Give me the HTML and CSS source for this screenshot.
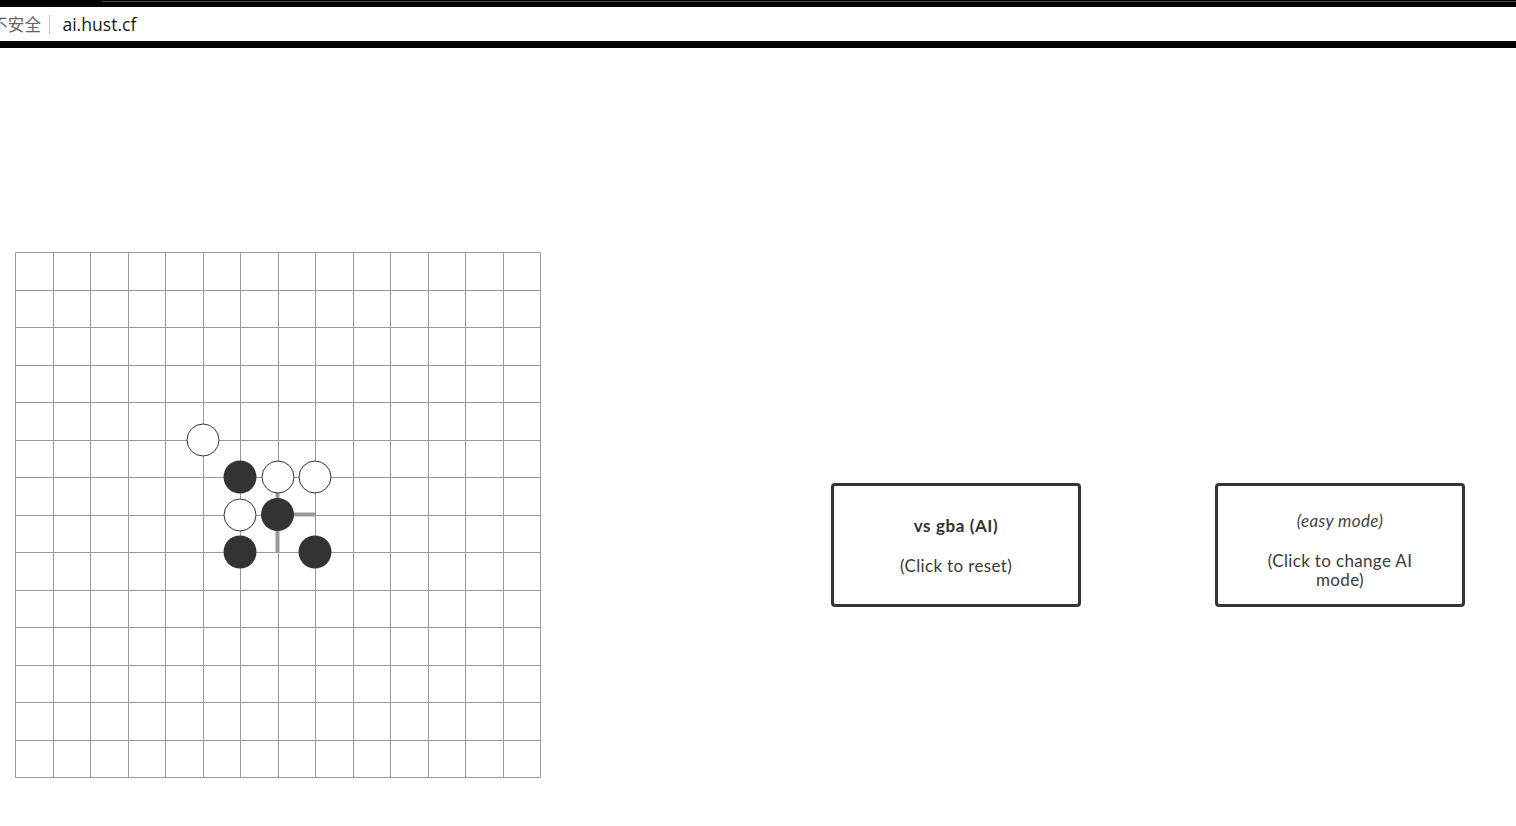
FILE: index.html
```html
<!DOCTYPE html>
<html>
<head>
<meta charset="utf-8">
<title>ai.hust.cf</title>
<link rel="stylesheet" href="styles.css">
</head>
<body>
<div class="chrome">
  <div class="chrome-top"><div class="chrome-line"></div></div>
  <div class="address">
    <span class="insecure">不安全</span>
    <span class="sep"></span>
    <span class="url">ai.hust.cf</span>
  </div>
  <div class="chrome-bottom"></div>
</div>
<main class="page">
  <svg class="board" width="526" height="526" viewBox="0 0 526 526">
    <path class="grid" d="M0.5 0.5V525.5M38.5 0.5V525.5M75.5 0.5V525.5M113.5 0.5V525.5M150.5 0.5V525.5M188.5 0.5V525.5M225.5 0.5V525.5M263.5 0.5V525.5M300.5 0.5V525.5M338.5 0.5V525.5M375.5 0.5V525.5M413.5 0.5V525.5M450.5 0.5V525.5M488.5 0.5V525.5M525.5 0.5V525.5M0.5 0.5H525.5M0.5 38.5H525.5M0.5 75.5H525.5M0.5 113.5H525.5M0.5 150.5H525.5M0.5 188.5H525.5M0.5 225.5H525.5M0.5 263.5H525.5M0.5 300.5H525.5M0.5 338.5H525.5M0.5 375.5H525.5M0.5 413.5H525.5M0.5 450.5H525.5M0.5 488.5H525.5M0.5 525.5H525.5"/>
    <path class="hint" d="M262.5 225V300M262.5 262.5H300"/>
    <circle class="white" cx="188" cy="188" r="16"/>
    <circle class="black" cx="225" cy="225" r="16.5"/>
    <circle class="white" cx="263" cy="225" r="16"/>
    <circle class="white" cx="300" cy="225" r="16"/>
    <circle class="white" cx="225" cy="263" r="16"/>
    <circle class="black" cx="262.5" cy="262.5" r="16.5"/>
    <circle class="black" cx="225" cy="300" r="16.5"/>
    <circle class="black" cx="300" cy="300" r="16.5"/>
  </svg>
  <div class="controls">
    <div class="btn">
      <div class="btn-title">vs gba (AI)</div>
      <div class="btn-sub">(Click to reset)</div>
    </div>
    <div class="btn btn-mode">
      <div class="btn-mode-title">(easy mode)</div>
      <div class="btn-sub">(Click to change AI mode)</div>
    </div>
  </div>
</main>
</body>
</html>
```

FILE: styles.css
```css
html, body {
  margin: 0;
  padding: 0;
  background: #fff;
}
body {
  width: 1516px;
  height: 826px;
  overflow: hidden;
  font-family: Lato, "Open Sans", sans-serif;
}
.chrome {
  display: flex;
  flex-direction: column;
}
.chrome-top {
  height: 7px;
  background: #000;
  display: flex;
  justify-content: flex-end;
}
.chrome-line {
  margin-top: 1px;
  width: 1414px;
  height: 1px;
  background: #4d4d4d;
}
.address {
  height: 34px;
  background: #fff;
  display: flex;
  align-items: center;
  margin-left: -9px;
}
.insecure {
  font-family: "Noto Sans CJK SC", sans-serif;
  font-size: 16.5px;
  color: #5f6368;
  letter-spacing: 0.3px;
}
.sep {
  width: 1px;
  height: 19px;
  background: #c4c4c4;
  margin: 0 12px 0 8px;
}
.url {
  font-family: "Open Sans", sans-serif;
  font-size: 17.6px;
  color: #1a1a1a;
}
.chrome-bottom {
  height: 7px;
  background: #000;
}
.page {
  display: flex;
  align-items: flex-start;
  padding: 204px 0 0 15px;
}
.board {
  display: block;
  flex: none;
}
.grid {
  fill: none;
  stroke: #999;
  stroke-width: 1;
}
.hint {
  fill: none;
  stroke: #999;
  stroke-width: 4;
}
.white {
  fill: #fff;
  stroke: #333;
  stroke-width: 1;
}
.black {
  fill: #333;
}
.controls {
  display: flex;
  gap: 134px;
  margin: 231px 0 0 290px;
}
.btn {
  box-sizing: border-box;
  width: 250px;
  height: 124px;
  border: 3px solid #333;
  border-radius: 4px;
  display: flex;
  flex-direction: column;
  align-items: center;
  justify-content: center;
  text-align: center;
  color: #333;
  font-size: 17px;
  letter-spacing: 0.35px;
  line-height: 19px;
}
.btn-title {
  font-weight: 700;
  font-size: 17px;
  letter-spacing: 0.6px;
  line-height: 20px;
  margin-bottom: 20px;
}
.btn-mode {
  padding-top: 10px;
}
.btn-mode-title {
  font-style: italic;
  line-height: 20px;
  margin-bottom: 20px;
  color: #444;
}
.btn-sub {
  max-width: 175px;
  color: #3a3a3a;
}
```
